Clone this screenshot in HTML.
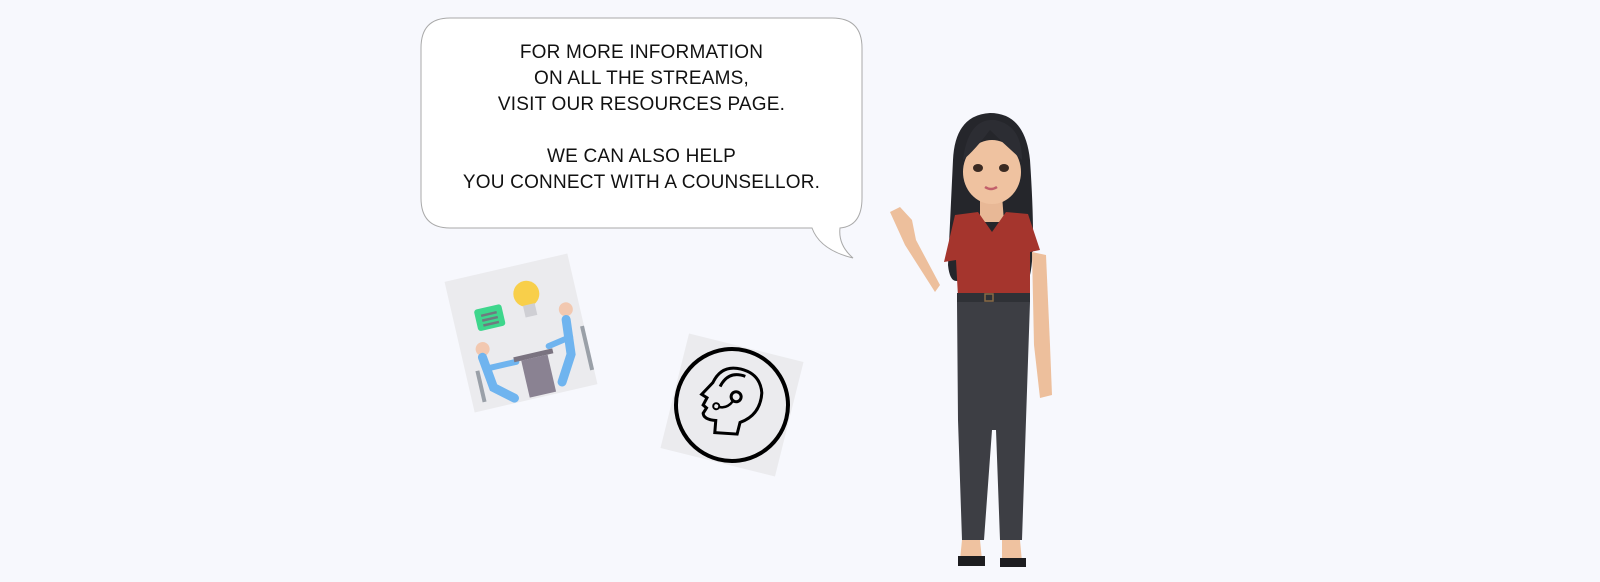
<!DOCTYPE html>
<html><head><style>
html,body{margin:0;padding:0}
body{width:1600px;height:582px;background:#f7f8fd;position:relative;overflow:hidden;font-family:"Liberation Sans",sans-serif}
.txt{position:absolute;left:421px;width:441px;top:40px;text-align:center;font-size:19px;line-height:26px;color:#111;letter-spacing:0.2px}
</style></head><body>
<svg width="1600" height="582" style="position:absolute;left:0;top:0">
  <path d="M450 18 H832 Q862 18 862 48 V198 Q862 226 840 228 Q838 245 853 258 Q820 250 812 228 H450 Q421 228 421 198 V48 Q421 18 450 18 Z" fill="#fff" stroke="#a9a9a9" stroke-width="1"/>
  <!-- card 1 -->
  <g transform="rotate(-13 521 333)">
    <rect x="458" y="266" width="126" height="134" fill="#ebebee"/>
    <rect x="480" y="300" width="28" height="22" rx="3" fill="#3ed68c"/>
    <rect x="486" y="306" width="16" height="2.5" fill="#6f7a80"/><rect x="486" y="311" width="16" height="2.5" fill="#6f7a80"/><rect x="486" y="316" width="16" height="2.5" fill="#6f7a80"/>
    <circle cx="535" cy="296" r="13" fill="#f8cf4a"/>
    <rect x="529" y="307" width="12" height="12" fill="#cfcfd4"/>
    <circle cx="480" cy="340" r="7" fill="#f2c8b0"/><circle cx="570" cy="320" r="7" fill="#f2c8b0"/>
    <path d="M478 348 L482 380 L500 395" stroke="#6fb4ef" stroke-width="9" fill="none" stroke-linecap="round"/>
    <path d="M568 330 L565 365 L550 390" stroke="#6fb4ef" stroke-width="9" fill="none" stroke-linecap="round"/>
    <path d="M482 360 L510 360 M545 352 L568 348" stroke="#6fb4ef" stroke-width="6" stroke-linecap="round"/>
    <rect x="508" y="355" width="40" height="5" fill="#7a7380"/>
    <rect x="515" y="360" width="27" height="38" fill="#8a8292"/>
    <path d="M470 360 V392 M582 340 V385" stroke="#9aa0a8" stroke-width="4"/>
  </g>
  <!-- card 2 -->
  <g transform="rotate(14 732 405)">
    <rect x="673" y="346" width="118" height="118" fill="#ebebee"/>
    <circle cx="732" cy="405" r="56" fill="none" stroke="#000" stroke-width="4"/>
    <path d="M744 432 L744 420 Q762 408 758 386 Q752 368 732 368 Q712 368 708 388 L700 402 L706 404 L704 412 L708 414 L706 420 Q708 426 720 424 L722 436 Z" fill="none" stroke="#000" stroke-width="3"/>
    <path d="M716 390 Q720 372 738 374" fill="none" stroke="#000" stroke-width="3"/>
    <circle cx="734" cy="396" r="5" fill="none" stroke="#000" stroke-width="3"/>
    <path d="M732 401 Q728 410 720 410" fill="none" stroke="#000" stroke-width="2.5"/>
    <circle cx="717" cy="410" r="3" fill="none" stroke="#000" stroke-width="2"/>
  </g>
  <!-- woman -->
  <path d="M990 113 Q955 115 953 160 L948 265 Q950 285 960 280 L1030 275 Q1036 250 1030 160 Q1025 113 990 113Z" fill="#25262b"/>
  <path d="M980 195 L1002 195 L1004 222 L980 222Z" fill="#e8b896"/>
  <ellipse cx="992" cy="172" rx="29" ry="32" fill="#efc2a0"/>
  <path d="M963 160 Q968 118 995 120 Q1022 125 1022 160 Q1005 145 990 130 Q975 150 963 160Z" fill="#2c2d33"/>
  <ellipse cx="978" cy="168" rx="5" ry="4" fill="#3a2a22"/><ellipse cx="1004" cy="168" rx="5" ry="4" fill="#3a2a22"/>
  <path d="M985 187 Q991 191 997 187" stroke="#c25f6a" stroke-width="2.5" fill="none"/>
  <path d="M890 212 L900 207 L912 220 L916 240 L940 285 L935 292 L905 245 Z" fill="#edbf9c"/>
  <path d="M955 215 L978 212 L992 232 L1006 212 L1028 214 L1040 250 L1030 252 L1030 297 L958 297 L956 260 L944 262 Z" fill="#a5352d"/>
  <rect x="957" y="293" width="73" height="9" fill="#2f3136"/>
  <rect x="985" y="294" width="8" height="7" fill="none" stroke="#8a6a45" stroke-width="1.5"/>
  <path d="M1032 252 L1046 255 L1050 345 L1052 395 L1040 398 L1034 345 Z" fill="#edbf9c"/>
  <path d="M957 302 L1030 302 L1026 420 L1022 540 L1000 540 L996 430 L992 430 L984 540 L962 540 L958 420 Z" fill="#3d3e44"/>
  <path d="M962 540 L960 560 L982 560 L980 540Z M1002 540 L1002 562 L1022 562 L1020 540Z" fill="#efc2a0"/>
  <path d="M958 556 L985 556 L985 566 L958 566Z M1000 558 L1026 558 L1026 567 L1000 567Z" fill="#1d1d20"/>
</svg>
<div class="txt">FOR MORE INFORMATION<br>ON ALL THE STREAMS,<br>VISIT OUR RESOURCES PAGE.<br><br>WE CAN ALSO HELP<br>YOU CONNECT WITH A COUNSELLOR.</div>
</body></html>
